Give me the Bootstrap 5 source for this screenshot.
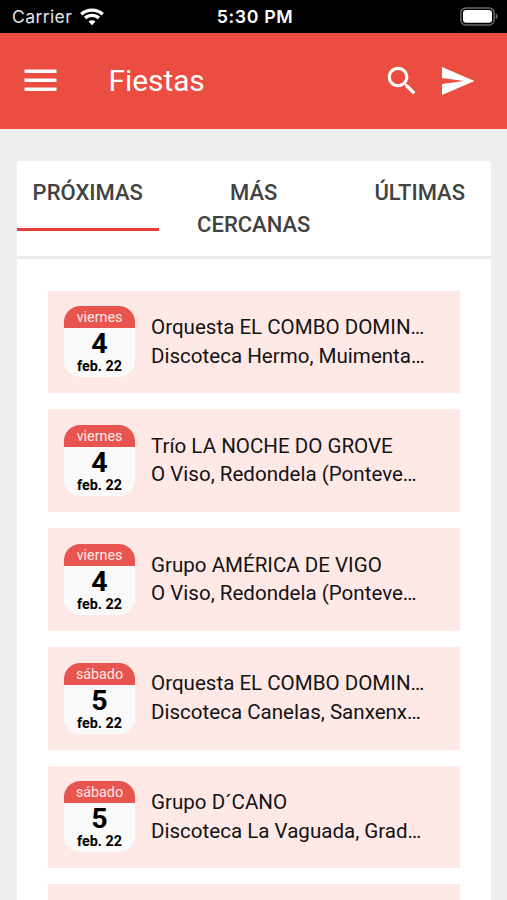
<!DOCTYPE html>
<html lang="es">
<head>
<meta charset="utf-8">
<meta name="viewport" content="width=device-width, initial-scale=1">
<title>Fiestas</title>
<link href="https://cdn.jsdelivr.net/npm/bootstrap@5.3.0/dist/css/bootstrap.min.css" rel="stylesheet">
<style>
body{font-family:Roboto,sans-serif;background:#eee;height:900px;overflow:hidden;color:#141212}
svg{display:block;flex:none}
.status{height:33px;background:#000;color:#fff;font-family:Inter,sans-serif;font-size:18px;line-height:34px;padding:0 9px 0 12px}
.status>div{flex:1 1 0}
.carrier{font-size:17.6px;letter-spacing:.35px;color:#e4e4e4}
.clock{font-weight:600;font-size:17.8px;letter-spacing:.6px}
.appbar{height:95.5px;background:#ec4d41;color:#fff;padding:0 32px 0 24px}
.appbar h1{font-size:29.8px;font-weight:400;margin-left:51.5px;line-height:36px}
.appbar .send{margin-left:20.5px}
.panel{margin:32.5px 16px 0 16.5px;border-radius:3px 3px 0 0;background:#fff}
.tabs{height:97.5px;border-bottom:3px solid #eaeaea}
.tabs .tab{font-size:22px;font-weight:500;line-height:31.7px;color:#424242;text-align:center;height:69.5px;padding:16px 8px 0;width:142.5px}
.tabs .tab.active{border-bottom:3px solid #e53d35}
.tabs .tab.wide{height:auto}
.list{height:641px;overflow:hidden;padding:32px 31.5px 0;gap:16px}
.event{height:102.8px;flex:none;background:#fee9e7;padding:15.8px 16px}
.date{width:71px;height:71px;border-radius:16px;background:#fafafa;overflow:hidden;text-align:center;color:#000;flex:none}
.date .day{background:#e8544f;color:#ffe9e5;font-size:14.3px;line-height:22px;height:22px}
.date .num{font-size:28.5px;font-weight:700;line-height:32px;height:28px}
.date .month{font-size:14.3px;font-weight:700;line-height:20px}
.info{font-size:20.55px;line-height:28.5px;margin-left:16px;padding-top:6.8px;white-space:nowrap}
</style>
<script src="https://cdn.jsdelivr.net/npm/bootstrap@5.3.0/dist/js/bootstrap.bundle.min.js"></script>
</head>
<body>
<div class="status d-flex align-items-center">
  <div class="d-flex align-items-center"><span class="carrier">Carrier</span>
    <svg class="ms-2" width="24" height="18" viewBox="0 0 24 18" fill="none" stroke="#fff" stroke-width="3.4"><path d="M1.3 6.2C7.3.7 16.7.7 22.7 6.2"/><path d="M5.1 10.1c3.9-3.6 9.9-3.6 13.8 0"/><path d="M12 17.2l-3.5-3.7c2-1.8 5-1.8 7 0z" fill="#fff" stroke="none"/></svg>
  </div>
  <span class="clock">5:30 PM</span>
  <div class="d-flex justify-content-end">
    <svg width="38" height="19" viewBox="0 0 38 19"><rect x=".9" y=".9" width="33.2" height="17" rx="5" fill="none" stroke="#686868" stroke-width="1.5"/><rect x="3" y="3" width="29" height="12.8" rx="3" fill="#fff"/><path d="M35.7 6.3q2 1 2 3.1t-2 3.1z" fill="#686868"/></svg>
  </div>
</div>
<nav class="appbar d-flex align-items-center">
  <svg width="33" height="24" viewBox="0 0 33 24" fill="#fff"><path d="M.5.4h32V4H.5zM.5 9.4h32V13H.5zM.5 18.4h32V22H.5z"/></svg>
  <h1 class="mb-0">Fiestas</h1>
  <svg class="ms-auto" width="38" height="38" viewBox="0 0 24 24" fill="#fff"><path d="M15.5 14h-.79l-.28-.27C15.41 12.59 16 11.11 16 9.5 16 5.91 13.09 3 9.5 3S3 5.91 3 9.5 5.91 16 9.5 16c1.61 0 3.09-.59 4.23-1.57l.27.28v.79l5 4.99L20.49 19l-4.99-5zm-6 0C7.01 14 5 11.99 5 9.5S7.01 5 9.5 5 14 7.01 14 9.5 11.99 14 9.5 14z"/></svg>
  <svg class="send" width="34" height="29" viewBox="0 0 34 29" fill="#fff"><path d="M1 1 33.5 15 1 29V18.1L23 15 1 11.9z"/></svg>
</nav>
<main class="panel">
  <div class="tabs d-flex justify-content-between">
    <div class="tab active">PRÓXIMAS</div>
    <div class="tab wide">MÁS CERCANAS</div>
    <div class="tab">ÚLTIMAS</div>
  </div>
  <div class="list d-flex flex-column">
    <div class="event d-flex"><div class="date"><div class="day">viernes</div><div class="num">4</div><div class="month">feb. 22</div></div><div class="info"><div>Orquesta EL COMBO DOMIN…</div><div>Discoteca Hermo, Muimenta…</div></div></div>
    <div class="event d-flex"><div class="date"><div class="day">viernes</div><div class="num">4</div><div class="month">feb. 22</div></div><div class="info"><div>Trío LA NOCHE DO GROVE</div><div>O Viso, Redondela (Ponteve…</div></div></div>
    <div class="event d-flex"><div class="date"><div class="day">viernes</div><div class="num">4</div><div class="month">feb. 22</div></div><div class="info"><div>Grupo AMÉRICA DE VIGO</div><div>O Viso, Redondela (Ponteve…</div></div></div>
    <div class="event d-flex"><div class="date"><div class="day">sábado</div><div class="num">5</div><div class="month">feb. 22</div></div><div class="info"><div>Orquesta EL COMBO DOMIN…</div><div>Discoteca Canelas, Sanxenx…</div></div></div>
    <div class="event d-flex"><div class="date"><div class="day">sábado</div><div class="num">5</div><div class="month">feb. 22</div></div><div class="info"><div>Grupo D´CANO</div><div>Discoteca La Vaguada, Grad…</div></div></div>
    <div class="event"></div>
  </div>
</main>
</body>
</html>
